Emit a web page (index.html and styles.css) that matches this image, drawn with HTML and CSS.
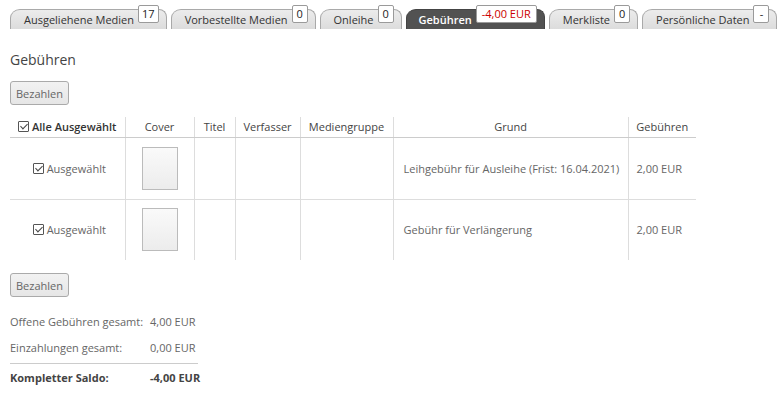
FILE: index.html
```html
<!DOCTYPE html>
<html lang="de">
<head>
<meta charset="utf-8">
<link rel="stylesheet" href="styles.css">
</head>
<body>
<nav class="tabs">
  <div class="tab"><span class="tab-label">Ausgeliehene Medien</span><span class="badge">17</span></div>
  <div class="tab"><span class="tab-label">Vorbestellte Medien</span><span class="badge">0</span></div>
  <div class="tab"><span class="tab-label">Onleihe</span><span class="badge">0</span></div>
  <div class="tab active"><span class="tab-label">Gebühren</span><span class="badge neg">-4,00 EUR</span></div>
  <div class="tab"><span class="tab-label">Merkliste</span><span class="badge">0</span></div>
  <div class="tab"><span class="tab-label">Persönliche Daten</span><span class="badge">-</span></div>
</nav>
<main class="content">
  <h2 class="title">Gebühren</h2>
  <button class="btn">Bezahlen</button>
  <table class="fees">
    <thead>
      <tr>
        <th class="c-sel"><span class="chk"></span>Alle Ausgewählt</th>
        <th class="c-cover">Cover</th>
        <th class="c-titel">Titel</th>
        <th class="c-verf">Verfasser</th>
        <th class="c-mg">Mediengruppe</th>
        <th class="c-grund">Grund</th>
        <th class="c-geb">Gebühren</th>
      </tr>
    </thead>
    <tbody>
      <tr>
        <td class="c-sel"><span class="chk"></span>Ausgewählt</td>
        <td class="c-cover"><div class="cover"></div></td>
        <td></td><td></td><td></td>
        <td class="c-grund">Leihgebühr für Ausleihe (Frist: 16.04.2021)</td>
        <td class="c-geb">2,00 EUR</td>
      </tr>
      <tr>
        <td class="c-sel"><span class="chk"></span>Ausgewählt</td>
        <td class="c-cover"><div class="cover"></div></td>
        <td></td><td></td><td></td>
        <td class="c-grund">Gebühr für Verlängerung</td>
        <td class="c-geb">2,00 EUR</td>
      </tr>
    </tbody>
  </table>
  <button class="btn">Bezahlen</button>
  <div class="summary">
    <div class="srow"><span class="slabel">Offene Gebühren gesamt:</span><span class="sval">4,00 EUR</span></div>
    <div class="srow sep"><span class="slabel">Einzahlungen gesamt:</span><span class="sval">0,00 EUR</span></div>
    <div class="srow total"><span class="slabel">Kompletter Saldo:</span><span class="sval">-4,00 EUR</span></div>
  </div>
</main>
</body>
</html>
```

FILE: styles.css
```css
* { box-sizing: border-box; }
body {
  margin: 0;
  font-family: "Open Sans", "Noto Sans", sans-serif;
  font-size: 11px;
  color: #666;
  background: #fff;
}
.tabs {
  display: flex;
  gap: 4px;
  padding: 9px 10px 0 10px;
}
.tab {
  flex-shrink: 0;
  display: flex;
  align-items: center;
  height: 20px;
  padding: 0 7px 0 13px;
  background: linear-gradient(#ececec, #dcdcdc);
  border: 1px solid #a9a9a9;
  border-bottom: none;
  border-radius: 10px 8px 0 0 / 9px 8px 0 0;
  color: #333;
  font-size: 11px;
  white-space: nowrap;
}
.tab-label { line-height: 18px; padding-top: 1px; }
.tab.active {
  background: #525252;
  border-color: #444;
  color: #fff;
  font-weight: 600;
  padding-left: 12px;
}
.badge {
  align-self: flex-start;
  margin: -5px 0 0 4px;
  min-width: 16px;
  height: 18px;
  padding: 0 3px;
  background: #fff;
  border: 1px solid #9a9a9a;
  border-radius: 2px;
  color: #222;
  font-size: 11px;
  font-weight: 400;
  line-height: 16px;
  text-align: center;
  white-space: nowrap;
}
.badge.neg { color: #c00; padding: 0 5px; }
.content { padding: 0 10px; }
.title {
  margin: 21px 0 12px 0;
  font-size: 14px;
  font-weight: 400;
  color: #444;
  line-height: 19px;
}
.btn {
  display: block;
  height: 24px;
  padding: 0 5px;
  background: linear-gradient(#f2f2f2, #e6e6e6);
  border: 1px solid #aaa;
  border-radius: 3px;
  font-family: inherit;
  font-size: 11px;
  color: #666;
}
.fees {
  border-collapse: collapse;
  margin: 12px 0 13px 0;
  width: 686px;
}
.fees th {
  font-weight: 400;
  color: #444;
  height: 20px;
  padding: 0 6px;
  border-left: 1px solid #ddd;
  border-bottom: 1px solid #ccc;
  text-align: center;
  white-space: nowrap;
}
.fees th.c-sel { font-weight: 600; color: #333; }
.fees td {
  height: 62px;
  padding: 0 8px;
  border-left: 1px solid #ddd;
  border-bottom: 1px solid #ddd;
  white-space: nowrap;
}
.fees tbody tr:last-child td { border-bottom: none; height: 61px; }
.fees th:first-child, .fees td:first-child { border-left: none; }
.c-sel { width: 115px; }
.fees td.c-sel { text-align: center; padding-left: 12px; }
.c-cover { width: 69px; }
.c-titel { width: 41px; }
.c-verf { width: 65px; }
.c-mg { width: 93px; }
.c-grund { width: 235px; }
.fees td.c-grund { padding-left: 10px; }
.cover {
  width: 36px;
  height: 43px;
  margin: 0 auto;
  border: 1px solid #bbb;
  background: linear-gradient(#fafafa, #ececec);
}
.chk {
  display: inline-block;
  width: 11px;
  height: 11px;
  margin-right: 3px;
  vertical-align: -1px;
  border: 1px solid #555;
  border-radius: 1px;
  position: relative;
}
.chk::after {
  content: "";
  position: absolute;
  left: 3px;
  top: 0px;
  width: 3px;
  height: 6px;
  border: solid #444;
  border-width: 0 1.5px 1.5px 0;
  transform: rotate(45deg);
}
.summary { margin-top: 11px; width: 188px; }
.srow {
  display: flex;
  height: 27px;
  align-items: center;
  white-space: nowrap;
}
.slabel { width: 140px; flex-shrink: 0; }
.srow.sep { height: 29px; padding-bottom: 3px; border-bottom: 1px solid #ccc; }
.srow.total { font-weight: 700; color: #444; }
```
